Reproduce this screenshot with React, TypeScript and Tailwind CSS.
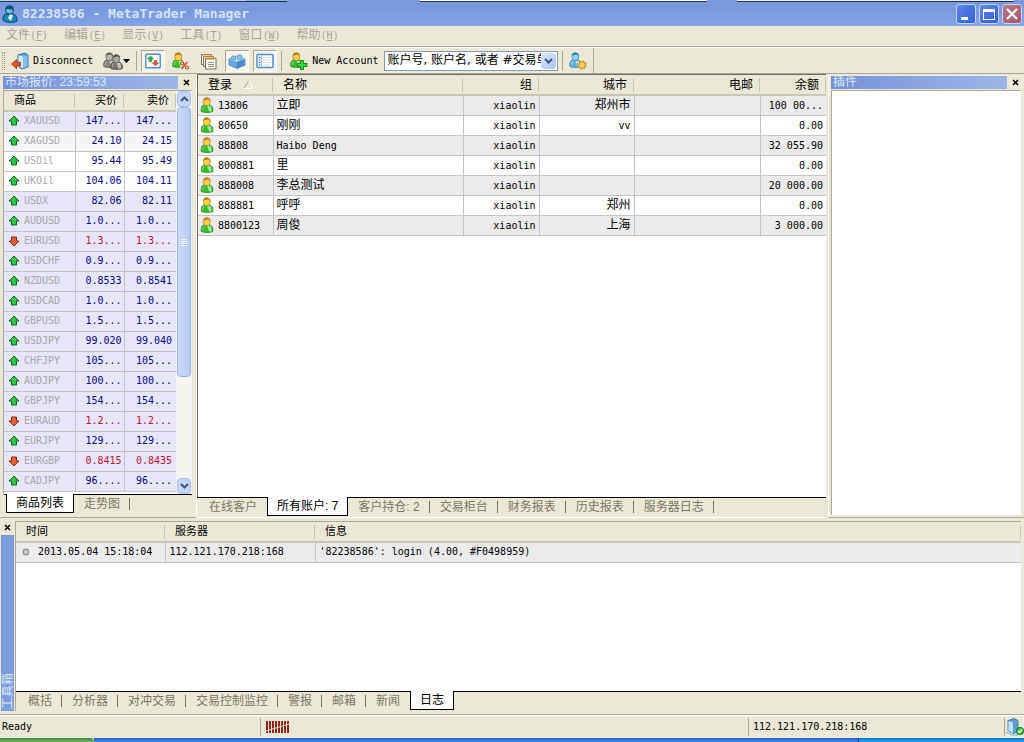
import { useState, type ReactNode } from "react";
import clsx from "clsx";

type Quote = { symbol: string; bid: string; ask: string; down?: boolean; bg?: string };
type Account = {
  login: string;
  name: string;
  group: string;
  city: string;
  email: string;
  balance: string;
};

const quotes: Quote[] = [
  { symbol: "XAUUSD", bid: "147...", ask: "147..." },
  { symbol: "XAGUSD", bid: "24.10", ask: "24.15", bg: "bg-[#f5f5f5]" },
  { symbol: "USOil", bid: "95.44", ask: "95.49", bg: "bg-white" },
  { symbol: "UKOil", bid: "104.06", ask: "104.11", bg: "bg-white" },
  { symbol: "USDX", bid: "82.06", ask: "82.11" },
  { symbol: "AUDUSD", bid: "1.0...", ask: "1.0..." },
  { symbol: "EURUSD", bid: "1.3...", ask: "1.3...", down: true },
  { symbol: "USDCHF", bid: "0.9...", ask: "0.9..." },
  { symbol: "NZDUSD", bid: "0.8533", ask: "0.8541" },
  { symbol: "USDCAD", bid: "1.0...", ask: "1.0..." },
  { symbol: "GBPUSD", bid: "1.5...", ask: "1.5..." },
  { symbol: "USDJPY", bid: "99.020", ask: "99.040" },
  { symbol: "CHFJPY", bid: "105...", ask: "105..." },
  { symbol: "AUDJPY", bid: "100...", ask: "100..." },
  { symbol: "GBPJPY", bid: "154...", ask: "154..." },
  { symbol: "EURAUD", bid: "1.2...", ask: "1.2...", down: true },
  { symbol: "EURJPY", bid: "129...", ask: "129..." },
  { symbol: "EURGBP", bid: "0.8415", ask: "0.8435", down: true },
  { symbol: "CADJPY", bid: "96....", ask: "96...." },
];

const accounts: Account[] = [
  { login: "13806", name: "立即", group: "xiaolin", city: "郑州市", email: "", balance: "100 00..." },
  { login: "80650", name: "刚刚", group: "xiaolin", city: "vv", email: "", balance: "0.00" },
  { login: "88808", name: "Haibo Deng", group: "xiaolin", city: "", email: "", balance: "32 055.90" },
  { login: "800881", name: "里", group: "xiaolin", city: "", email: "", balance: "0.00" },
  { login: "888008", name: "李总测试", group: "xiaolin", city: "", email: "", balance: "20 000.00" },
  { login: "888881", name: "呼呼", group: "xiaolin", city: "郑州", email: "", balance: "0.00" },
  { login: "8800123", name: "周俊", group: "xiaolin", city: "上海", email: "", balance: "3 000.00" },
];

const menus = [
  ["文件", "F"],
  ["编辑", "E"],
  ["显示", "V"],
  ["工具", "T"],
  ["窗口", "W"],
  ["帮助", "H"],
];

const mono = "font-['DejaVu_Sans_Mono','Noto_Sans_CJK_SC',monospace] text-[10px]";

// Latin text goes in the fixed-width face, Chinese stays in the page font
function Txt({ children }: { children: string }) {
  const latin = /^[\x00-\x7f]*$/.test(children);
  return <span className={latin ? mono : "text-xs"}>{children}</span>;
}

/* ---------- icons ---------- */

function Person({ body = "#35bd2c", edge = "#1c8a18", head = "#fbd04e", hair = "#b9801c" }) {
  return (
    <>
      <path
        d="M.8 14.300C.4 10.800 1.400 8.300 4 7.800h4.400c2.900.4 4.400 2.900 4 6.500-1.400 1.500-10.200 1.500-11.600 0z"
        fill={body}
        stroke={edge}
        strokeWidth=".8"
      />
      <path d="M6.500 8.500l3.800.5 1 4.500-2.300 1.500-1.500-3z" fill="#fff" fillOpacity=".55" />
      <path d="M2.200 13c0-1.900.6-3.100 1.800-3.700" stroke="#fff" strokeOpacity=".5" fill="none" />
      <ellipse cx="6.300" cy="4.800" rx="3.500" ry="4" fill={head} stroke={hair} strokeWidth=".7" />
      <path d="M2.700 4C2.600 1.700 4.200.5 6.300.5S10.200 1.700 9.900 4.200C9 3.900 8.500 3 8 2.300 6.500 3 4.500 2.900 2.700 4z" fill={hair} />
    </>
  );
}

function AccountIcon() {
  return (
    <svg width="14" height="16" viewBox="0 0 13 16" className="shrink-0" aria-hidden="true">
      <Person />
    </svg>
  );
}

function AppIcon() {
  return (
    <svg width="16" height="18" viewBox="0 0 16 18" aria-hidden="true">
      <path d="M1 15c0-4 1-6 4-6h5c3 0 5 2 5 7-3 2-12 2-14-1z" fill="#1b84b8" stroke="#0a3f66" />
      <path d="M8 9l3 1-2 6-3-3z" fill="#e8f6fb" />
      <circle cx="7.500" cy="5" r="4" fill="#5cc3ea" stroke="#0a3f66" />
      <path d="M3 5c0-3 2-4.500 5-4.500s4 2 3.500 4.500C9 5 6 3 3 5z" fill="#0f4f7c" />
    </svg>
  );
}

function DisconnectIcon() {
  return (
    <svg width="18" height="18" viewBox="0 0 18 18" aria-hidden="true">
      <path d="M7 3l7-2 3 2v12l-6 2-4-3z" fill="#5f9fdc" stroke="#2c6dae" />
      <path d="M7.500 3.200l4.500 1.300v12l-4.500-2.500z" fill="#d6ecfb" />
      <path d="M12 4.500l4.500-1.300v11.500l-4.500 1.800z" fill="#86bdec" />
      <path d="M.5 12l5-4.500v2.800h4v3.600h-4v2.800z" fill="#e2592c" stroke="#952e0d" strokeWidth=".8" />
    </svg>
  );
}

function GroupIcon() {
  return (
    <svg width="20" height="18" viewBox="0 0 20 18" aria-hidden="true">
      <Person body="#86857c" edge="#4f4e48" head="#b9b8ae" hair="#66655c" />
      <g transform="translate(7 2)">
        <Person body="#77766d" edge="#44433d" head="#aaa99f" hair="#57564e" />
      </g>
    </svg>
  );
}

function QuotesIcon() {
  return (
    <svg width="16" height="16" viewBox="0 0 16 16" aria-hidden="true">
      <rect x=".8" y="1.300" width="14.400" height="13.400" rx="1" fill="#fff" stroke="#4d8fcf" strokeWidth="1.400" />
      <path d="M5.500 3L8.500 6H6.800v2.500H4.200V6H2.500z" fill="#2fb52f" stroke="#167016" strokeWidth=".6" />
      <path d="M10.500 13l-3-3h1.700V7.500h2.600V10h1.700z" fill="#e8603a" stroke="#9c2f10" strokeWidth=".6" />
    </svg>
  );
}

function PercentIcon() {
  return (
    <svg width="18" height="18" viewBox="0 0 18 18" aria-hidden="true">
      <Person />
      <path d="M8 9h10v9H8z" fill="#ebe8d8" fillOpacity=".6" />
      <g stroke="#d4411b" strokeWidth="1.200" fill="#fff">
        <circle cx="10.200" cy="11.500" r="1.500" />
        <circle cx="15" cy="15.500" r="1.500" />
        <path d="M15.500 10l-6 7" />
      </g>
    </svg>
  );
}

function PagesIcon() {
  return (
    <svg width="18" height="18" viewBox="0 0 18 18" aria-hidden="true">
      <g fill="#fdfcf5" stroke="#77705c">
        <path d="M1.500 2.500h10v10h-10z" />
        <path d="M3.500 4.500h10v10h-10z" />
        <path d="M5.500 6.500h10.500v10.500h-10.500z" />
      </g>
      <path d="M2 3h9.500M4 5h9.500M6 7h9.500" stroke="#e39a3b" />
      <path d="M8 10.500h6M8 12.500h6M8 14.500h6" stroke="#9a9484" />
    </svg>
  );
}

function CubeIcon() {
  return (
    <svg width="18" height="16" viewBox="0 0 18 16" aria-hidden="true">
      <path d="M1 6l8-3 8 3v6l-8 3.500L1 12z" fill="#6aa9e0" stroke="#3c7dbd" strokeWidth=".7" />
      <path d="M1 6l8-3 8 3-8 3z" fill="#aed6f5" />
      <path d="M9 9l8-3v6l-8 3.500z" fill="#4a8ccd" />
      <path d="M3.500 4c0-1.500 4-1.500 4 0v2c-1 1-3 1-4 0zM9.500 3c0-1.500 4.500-1.500 4.500 0v2.500c-1 1-3.500 1-4.500 0z" fill="#8cc2ec" stroke="#3c7dbd" strokeWidth=".6" />
    </svg>
  );
}

function PanelIcon() {
  return (
    <svg width="18" height="16" viewBox="0 0 18 16" aria-hidden="true">
      <rect x="1" y="1.500" width="16" height="13" rx="1" fill="#fff" stroke="#4d8fcf" strokeWidth="1.500" />
      <path d="M5.500 2v12" stroke="#9cc5ea" />
      <path d="M3.500 4v1M3.500 6.500v1M3.500 9v1M3.500 11.500v1" stroke="#2c3e94" strokeWidth="1.500" />
      <path d="M7.500 4.500h7M7.500 7h7M7.500 9.500h7M7.500 12h7" stroke="#d4dde8" />
    </svg>
  );
}

function AddAccountIcon() {
  return (
    <svg width="18" height="18" viewBox="0 0 18 18" aria-hidden="true">
      <Person />
      <path d="M10.500 8.500h3v3H17v3h-3.500v3h-3v-3h-3v-3h3z" fill="#3fd43f" stroke="#0f800f" strokeWidth=".9" />
    </svg>
  );
}

function GearPersonIcon() {
  return (
    <svg width="18" height="18" viewBox="0 0 18 18" aria-hidden="true">
      <Person body="#5fb4e0" edge="#2b7bb0" head="#8fd2f0" hair="#2f86bb" />
      <circle cx="13" cy="13" r="3.200" fill="#fbe27a" stroke="#c6921a" strokeWidth="1.200" />
      <circle cx="13" cy="13" r="4.300" fill="none" stroke="#d9a520" strokeWidth="1.300" strokeDasharray="1.700 1.670" />
      <circle cx="13" cy="13" r="1.200" fill="#fff" stroke="#c6921a" strokeWidth=".6" />
    </svg>
  );
}

function ServerIcon() {
  return (
    <svg width="18" height="18" viewBox="0 0 18 18" aria-hidden="true">
      <path d="M2 2.500l6-2 4 2v11l-5 2-5-3z" fill="#5e9dd2" stroke="#2d6aa2" strokeWidth=".8" />
      <path d="M2.400 3l4.600 1.500v10.700l-4.600-2.600z" fill="#c4e2f7" />
      <path d="M0 14l6 3h6" stroke="#69aee0" fill="none" />
      <circle cx="14" cy="13" r="3.700" fill="#46bb46" stroke="#16801b" />
      <path d="M12.200 13l1.300 1.500 2.500-3" stroke="#fff" strokeWidth="1.200" fill="none" />
    </svg>
  );
}

function Arrow({ down }: { down?: boolean }) {
  return (
    <svg width="12" height="12" viewBox="0 0 12 12" className="shrink-0" aria-hidden="true">
      {down ? (
        <path d="M6 11L1 6h2.500V2h5v4H11z" fill="#e5603a" stroke="#8f2a0c" />
      ) : (
        <path d="M6 1L1 6h2.500v4h5V6H11z" fill="#32c24a" stroke="#0b6b1c" />
      )}
    </svg>
  );
}

function Chevron({ up }: { up?: boolean }) {
  return (
    <svg width="9" height="6" viewBox="0 0 9 6" aria-hidden="true">
      <path d={up ? "M1 5l3.500-3.500L8 5" : "M1 1l3.500 3.500L8 1"} fill="none" stroke="#3f5686" strokeWidth="2" />
    </svg>
  );
}

function CloseButton({ label }: { label: string }) {
  return (
    <button aria-label={label} className="flex size-3 items-center justify-center">
      <svg width="7" height="7" viewBox="0 0 7 7" aria-hidden="true">
        <path d="M1 1l5 5M6 1L1 6" stroke="#000" strokeWidth="1.500" />
      </svg>
    </button>
  );
}

/* ---------- shared parts ---------- */

function Th({ children, right, small }: { children: ReactNode; right?: boolean; small?: boolean }) {
  return (
    <th className="h-5 border-b-2 border-[#cbc7b8] bg-[#ebe8d8] p-0 font-normal">
      <div
        className={clsx(
          "flex h-3.5 items-center border-r border-[#c7c5b2] leading-none whitespace-nowrap",
          small ? "text-[11px]" : "text-xs",
          right ? "justify-end pr-1.5" : "pl-2.5",
        )}
      >
        {children}
      </div>
    </th>
  );
}

function Tabs({ items, initial, label }: { items: string[]; initial: number; label: string }) {
  const [active, setActive] = useState(initial);
  return (
    <div role="tablist" aria-label={label} className="flex h-5 items-start border-t border-black pl-0.5 text-xs">
      {items.map((t, i) => (
        <button
          key={t}
          role="tab"
          aria-selected={i === active}
          onClick={() => setActive(i)}
          className={clsx(
            "shrink-0 whitespace-nowrap",
            i === active
              ? "-mt-px h-[19px] border-x border-b border-black bg-white px-[9px]"
              : "flex h-[18px] items-center text-[#7b7866]",
          )}
        >
          {i === active ? (
            t
          ) : (
            <span
              className={clsx(
                "border-r pr-[9px] pl-2.5 leading-3",
                i + 1 === active ? "border-transparent" : "border-[#7b7866]",
              )}
            >
              {t}
            </span>
          )}
        </button>
      ))}
    </div>
  );
}

function ToolButton({ label, pressed, children }: { label: string; pressed?: boolean; children: ReactNode }) {
  return (
    <button
      aria-label={label}
      aria-pressed={pressed}
      className={clsx(
        "flex h-[22px] w-6 shrink-0 items-center justify-center",
        pressed && "border border-t-[#aca899] border-r-white border-b-white border-l-[#aca899] bg-[#f4f2ea]",
      )}
    >
      {children}
    </button>
  );
}

function Divider() {
  return <div className="h-5 w-px shrink-0 bg-[#aca899]" />;
}

/* ---------- sections ---------- */

function TitleBar() {
  const box = "flex h-5 w-5 items-center justify-center rounded-[3px] border border-[#c5d3f5]";
  return (
    <header>
      <div className="flex h-0.5 bg-[#7b97dd]">
        <div className="w-[24%] border-b border-[#24344f] bg-[#b9d3f0]" />
        <div className="w-[4%] border-b border-[#24344f] bg-[#8fb3e8]" />
        <div className="ml-[13%] w-[28%] border-b border-[#24344f] bg-white" />
        <div className="ml-[3%] w-[27%] border-b border-[#24344f] bg-[#e8eef8]" />
      </div>
      <div className="flex h-6 items-center bg-linear-to-b from-[#7b97dd] via-[#7d9be0] to-[#84a5ec] pr-0.5 pl-0.5">
        <AppIcon />
        <h1 className="ml-1 flex-1 font-['DejaVu_Sans_Mono',monospace] text-[13px] font-bold whitespace-pre text-[#d6e2fa]">
          82238586 - MetaTrader Manager
        </h1>
        <div className="flex gap-[3px]">
          <button aria-label="最小化" className={clsx(box, "bg-linear-to-br from-[#5f88e8] to-[#2d5fd6]")}>
            <span className="mt-2 mr-1 h-[3px] w-[7px] bg-white" />
          </button>
          <button aria-label="最大化" className={clsx(box, "bg-linear-to-br from-[#5f88e8] to-[#2d5fd6]")}>
            <span className="h-[11px] w-3 border border-t-[3px] border-white" />
          </button>
          <button aria-label="关闭" className={clsx(box, "bg-linear-to-br from-[#b87a8c] to-[#a8586a]")}>
            <svg width="12" height="12" viewBox="0 0 12 12" aria-hidden="true">
              <path d="M1 1l10 10M11 1L1 11" stroke="#fff" strokeWidth="2.200" />
            </svg>
          </button>
        </div>
      </div>
    </header>
  );
}

function MenuBar() {
  return (
    <nav className="flex h-[21px] items-center gap-4 border-b border-[#aca899] px-1.5 pb-0.5 text-xs text-[#a9a698]">
      {menus.map(([name, key]) => (
        <button key={key} className="whitespace-nowrap">
          {name}
          <span className={mono}>
            (<u>{key}</u>)
          </span>
        </button>
      ))}
    </nav>
  );
}

function Toolbar() {
  const [query, setQuery] = useState("账户号, 账户名, 或者 #交易单");
  return (
    <div className="flex h-[27px] items-center border-t border-b border-t-white border-b-[#aca899]">
      <div className="flex h-full items-center border-r border-[#aca899] pr-1.5">
        <div className="mx-0.5 h-[18px] w-[3px] border-x border-dotted border-[#a09d8c]" />
        <button className="ml-1 flex items-center gap-1 whitespace-nowrap">
          <DisconnectIcon />
          <span className={mono}>Disconnect</span>
        </button>
        <button aria-label="用户组" className="mr-1.5 ml-2.5 flex items-center">
          <GroupIcon />
          <svg width="7" height="4" viewBox="0 0 7 4" aria-hidden="true">
            <path d="M0 0h7L3.500 4z" />
          </svg>
        </button>
        <Divider />
        <div className="mx-1 flex gap-1">
          <ToolButton label="市场报价" pressed>
            <QuotesIcon />
          </ToolButton>
          <ToolButton label="佣金">
            <PercentIcon />
          </ToolButton>
          <ToolButton label="复制">
            <PagesIcon />
          </ToolButton>
          <ToolButton label="插件" pressed>
            <CubeIcon />
          </ToolButton>
          <ToolButton label="工具箱" pressed>
            <PanelIcon />
          </ToolButton>
        </div>
        <Divider />
        <button className="ml-2 flex items-center gap-1 whitespace-nowrap">
          <AddAccountIcon />
          <span className={mono}>New Account</span>
        </button>
        <div className="mr-1 ml-1.5 flex h-5 w-[174px] items-center border border-[#7f9db9] bg-white pr-px pl-0.5">
          <input
            aria-label="搜索账户"
            value={query}
            onChange={(e) => setQuery(e.target.value)}
            className="h-full min-w-0 flex-1 pb-1 font-['DejaVu_Sans','Noto_Sans_CJK_SC',sans-serif] text-xs outline-none"
          />
          <button
            aria-label="展开"
            className="flex h-4 w-[15px] items-center justify-center rounded-sm bg-linear-to-br from-[#dbe6fd] to-[#abc3f4]"
          >
            <Chevron />
          </button>
        </div>
        <Divider />
        <button aria-label="账户设置" className="ml-1.5">
          <GearPersonIcon />
        </button>
      </div>
    </div>
  );
}

function PanelTitle({ children, closeLabel }: { children: ReactNode; closeLabel: string }) {
  return (
    <div className="flex items-center gap-0.5">
      <h2 className="h-[13px] flex-1 truncate bg-linear-to-r from-[#7792da] to-[#9db6e8] pl-0.5 text-xs leading-[13px] text-[#dbe5fa]">
        {children}
      </h2>
      <CloseButton label={closeLabel} />
    </div>
  );
}

function MarketWatch() {
  return (
    <aside className="flex w-[197px] shrink-0 flex-col border-r border-b border-r-white border-b-[#aca899] pt-0.5 pr-1 pl-[3px]">
      <PanelTitle closeLabel="关闭市场报价">市场报价: 23:59:53</PanelTitle>
      <div className="mt-px flex flex-1 border-t border-l border-[#aca899] bg-white">
        <div className="flex-1">
          <table className="w-full table-fixed border-collapse">
            <colgroup>
              <col className="w-[71px]" />
              <col className="w-[49px]" />
              <col />
            </colgroup>
            <thead>
              <tr>
                <Th small>商品</Th>
                <Th small right>买价</Th>
                <Th small right>卖价</Th>
              </tr>
            </thead>
            <tbody>
              {quotes.map((q) => (
                <tr
                  key={q.symbol}
                  className={clsx("h-5", q.bg ?? "bg-[#e6e6f8]", q.down ? "text-[#c41432]" : "text-[#08088f]")}
                >
                  <td className="border-r border-b border-[#c4c4c4] p-0">
                    <div className={clsx("flex items-center gap-1 pl-1 leading-none text-[#a9a9a9]", mono)}>
                      <Arrow down={q.down} />
                      {q.symbol}
                    </div>
                  </td>
                  <td className={clsx("border-r border-b border-[#c4c4c4] p-0 pr-0.5 text-right leading-none", mono)}>
                    {q.bid}
                  </td>
                  <td className={clsx("border-b border-[#c4c4c4] p-0 pr-1 text-right leading-none", mono)}>{q.ask}</td>
                </tr>
              ))}
            </tbody>
          </table>
        </div>
        <div className="flex w-4 shrink-0 flex-col border-x border-[#eef1f8] bg-[#f6f5ee]">
          <button
            aria-label="向上滚动"
            className="flex h-4 items-center justify-center rounded-sm border border-[#a9bfee] bg-[#c6d6fb]"
          >
            <Chevron up />
          </button>
          <div className="flex flex-8 flex-col items-center justify-center gap-px rounded-sm border border-[#9db5ea] bg-linear-to-r from-[#cbdafd] to-[#b8cbf8]">
            <i className="h-px w-1.5 bg-[#f3f7ff]" />
            <i className="h-px w-1.5 bg-[#f3f7ff]" />
            <i className="h-px w-1.5 bg-[#f3f7ff]" />
            <i className="h-px w-1.5 bg-[#f3f7ff]" />
          </div>
          <div className="flex-3" />
          <button
            aria-label="向下滚动"
            className="flex h-4 items-center justify-center rounded-sm border border-[#a9bfee] bg-[#c6d6fb]"
          >
            <Chevron />
          </button>
        </div>
      </div>
      <div className="pb-[3px] pl-px">
        <Tabs label="市场报价" items={["商品列表", "走势图"]} initial={0} />
      </div>
    </aside>
  );
}

function Accounts() {
  return (
    <main className="flex min-w-0 flex-1 flex-col border-b border-white">
      <div className="flex-1 border-t border-l border-[#6f6c5f] bg-white">
        <table className="w-full table-fixed border-collapse">
          <colgroup>
            <col className="w-[75px]" />
            <col className="w-[190px]" />
            <col className="w-[76px]" />
            <col className="w-[95px]" />
            <col className="w-[126px]" />
            <col />
          </colgroup>
          <thead>
            <tr>
              <Th>
                登录
                <svg width="9" height="8" viewBox="0 0 9 8" className="ml-3" aria-hidden="true">
                  <path d="M4.500 0L9 7.500H0" fill="none" stroke="#fff" />
                  <path d="M4.500 0L0 7.500" stroke="#aca899" />
                </svg>
              </Th>
              <Th>名称</Th>
              <Th right>组</Th>
              <Th right>城市</Th>
              <Th right>电邮</Th>
              <Th right>余额</Th>
            </tr>
          </thead>
          <tbody>
            {accounts.map((a) => (
              <tr
                key={a.login}
                className="h-5 leading-none whitespace-nowrap odd:bg-[#ebebeb] [&>td]:border-b [&>td]:border-[#c4c4c4] [&>td]:p-0 [&>td:not(:last-child)]:border-r"
              >
                <td>
                  <div className="flex items-center gap-1 pl-0.5">
                    <AccountIcon />
                    <span>
                      <Txt>{a.login}</Txt>
                    </span>
                  </div>
                </td>
                <td>
                  <div className="pl-[3px]">
                    <Txt>{a.name}</Txt>
                  </div>
                </td>
                {[a.group, a.city, a.email, a.balance].map((v, i) => (
                  <td key={i}>
                    <div className="pr-[3px] text-right">
                      <Txt>{v}</Txt>
                    </div>
                  </td>
                ))}
              </tr>
            ))}
          </tbody>
        </table>
      </div>
      <Tabs
        label="账户"
        items={["在线客户", "所有账户: 7", "客户持仓: 2", "交易柜台", "财务报表", "历史报表", "服务器日志"]}
        initial={1}
      />
    </main>
  );
}

function Plugins() {
  return (
    <aside className="ml-0.5 flex w-[196px] shrink-0 flex-col border-b border-l border-b-[#aca899] border-l-white pt-0.5 pr-[3px] pb-0.5 pl-0.5">
      <PanelTitle closeLabel="关闭插件">插件</PanelTitle>
      <div className="mt-px flex-1 border border-t-[#aca899] border-r-white border-b-white border-l-[#aca899] bg-white" />
    </aside>
  );
}

function Toolbox() {
  return (
    <section className="flex min-h-[197px] border-b border-[#aca899] pt-[3px] pr-[3px] pb-[3px]">
      <div className="flex w-[15px] shrink-0 flex-col items-center gap-0.5">
        <CloseButton label="关闭工具箱" />
        <h2 className="flex w-[13px] flex-1 rotate-180 items-center bg-[#7f9be0] pt-0.5 pr-0.5 text-xs leading-[11px] text-[#dbe5fa] [writing-mode:vertical-rl]">
          <span className="[text-orientation:sideways]">工具箱</span>
        </h2>
      </div>
      <div className="flex min-w-0 flex-1 flex-col border-t border-l border-[#aca899]">
        <div className="flex-1 bg-white">
          <table className="w-full table-fixed border-collapse">
            <colgroup>
              <col className="w-[149px]" />
              <col className="w-[150px]" />
              <col />
            </colgroup>
            <thead>
              <tr>
                <Th small>时间</Th>
                <Th small>服务器</Th>
                <Th small>信息</Th>
              </tr>
            </thead>
            <tbody>
              <tr
                className={clsx(
                  "h-5 bg-[#ebebeb] leading-none whitespace-pre [&>td]:border-b [&>td]:border-[#c4c4c4] [&>td]:p-0 [&>td:not(:last-child)]:border-r",
                  mono,
                )}
              >
                <td>
                  <div className="flex items-center gap-2 pl-1.5">
                    <svg width="8" height="8" viewBox="0 0 8 8" aria-hidden="true">
                      <circle cx="4" cy="4" r="3" fill="#c4c4c4" stroke="#858585" />
                    </svg>
                    2013.05.04 15:18:04
                  </div>
                </td>
                <td>
                  <div className="pl-1">112.121.170.218:168</div>
                </td>
                <td>
                  <div className="pl-1">{"'82238586': login (4.00, #F0498959)"}</div>
                </td>
              </tr>
            </tbody>
          </table>
        </div>
        <Tabs
          label="工具箱"
          items={["概括", "分析器", "对冲交易", "交易控制监控", "警报", "邮箱", "新闻", "日志"]}
          initial={7}
        />
      </div>
    </section>
  );
}

function StatusBar() {
  return (
    <footer>
      <div className={clsx("flex h-[23px] items-center border-t border-white", mono)}>
        <div className="flex-1 pl-0.5">Ready</div>
        <div className="flex h-[18px] w-[488px] items-center border-l border-[#aca899] pl-[5px]">
          <svg width="24" height="13" viewBox="0 0 24 13" aria-hidden="true">
            <path d="M1 0v12M4 0v12M7 0v12M10 0v12M13 0v12M16 0v12M19 0v12M22 0v12" stroke="#8e2416" strokeWidth="2" />
            <path d="M0 10L23 3" stroke="#ebe8d8" />
          </svg>
        </div>
        <div className="flex h-[18px] w-64 items-center border-l border-[#aca899] pl-1">112.121.170.218:168</div>
        <div className="flex h-[18px] w-5 items-center border-l border-[#aca899] pl-px">
          <ServerIcon />
        </div>
      </div>
      <div className="flex h-1">
        <div className="w-[94px] rounded-tr bg-linear-to-b from-[#3d8a3d] to-[#6cb864]" />
        <div className="flex-1 bg-linear-to-b from-[#2a5fc0] to-[#3f86f0]" />
        <div className="w-[166px] border-l border-[#0b3c8c] bg-linear-to-b from-[#1370c4] to-[#20a4f2]" />
      </div>
    </footer>
  );
}

export default function App() {
  return (
    <div className="flex min-h-screen flex-col bg-[#ebe8d8] font-['Liberation_Sans','Noto_Sans_CJK_SC',sans-serif] text-xs text-black">
      <TitleBar />
      <MenuBar />
      <Toolbar />
      <div className="flex flex-1">
        <MarketWatch />
        <Accounts />
        <Plugins />
      </div>
      <Toolbox />
      <StatusBar />
    </div>
  );
}
